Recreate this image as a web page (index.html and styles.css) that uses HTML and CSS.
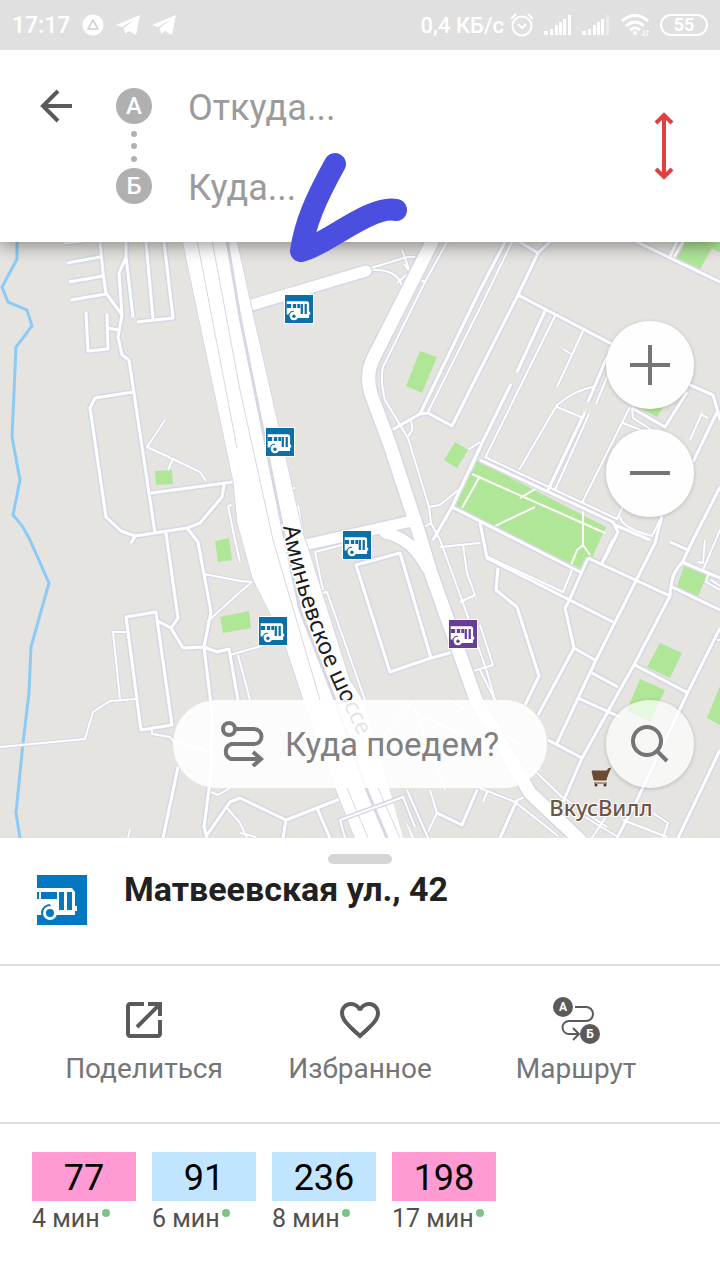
FILE: index.html
```html
<!DOCTYPE html>

<html lang="ru">
	<head>
		<meta charset="utf-8">
		<meta name="viewport" content="width=device-width, initial-scale=1">
		<title>Матвеевская ул., 42</title>
		<link rel="stylesheet" href="styles.css">
	</head>

	<body>
		<!-- Shared icons -->
		<svg class="sprite" aria-hidden="true">
			<symbol id="bus" viewBox="0 0 50 50">
				<rect width="50" height="50" fill="currentColor"/>
				<path fill="#fff" d="M0 13h35l3 4v14h2v5h-2v4H0z"/>
				<path fill="currentColor" d="M0 17h2v7H0zM4 17h16v7H4zM22 17h5v18h-5zM30 17h5v18h-5z"/>
				<circle cx="13" cy="38" r="9" fill="currentColor"/>
				<path fill="#fff" d="M13 29h9v11h-5z"/>
				<path fill="currentColor" d="M0 40h50v10H0z"/>
				<circle cx="13" cy="38" r="7" fill="#fff"/>
				<circle cx="13" cy="38" r="4" fill="currentColor"/>
			</symbol>
			<!-- same bus, drawn larger for the map pins -->
			<symbol id="pin" viewBox="0 0 50 50">
				<rect width="50" height="50" fill="currentColor"/>
				<path fill="#fff" d="M3 11h36q4 0 4 5v14h2v5h-2v6H22a8 8 0 0 1-14-6H3z"/>
				<path fill="currentColor" d="M3 16h8v7H3zM14 16h6v7h-6zM22 16h5v7h-5zM28 16h4v18h-4zM35 16h4v18h-4z"/>
				<path fill="none" stroke="currentColor" stroke-width="2" d="M7 37a8 8 0 0 1 9-8"/>
				<circle cx="16" cy="38" r="7" fill="#fff"/>
				<circle cx="16" cy="38" r="3" fill="currentColor"/>
			</symbol>
			<symbol id="plane" viewBox="0 0 24 20">
				<path fill="#fff" d="M0 10 24 0 20 20 13 16 9 19 8 13 19 4 6 12z"/>
			</symbol>
		</svg>

		<div class="status">
			<span class="clock">17:17</span>
			<svg class="notice" width="22" height="22" viewBox="0 0 22 22"><circle cx="11" cy="11" r="10.5" fill="#fff"/><path d="M11 6 16 15H6z" fill="none" stroke="#d8d8d8" stroke-width="2" stroke-linejoin="round"/></svg>
			<svg class="notice" width="24" height="20"><use href="#plane"/></svg>
			<svg class="notice" width="24" height="20"><use href="#plane"/></svg>
			<span class="speed">0,4 КБ/с</span>
			<svg width="24" height="24" viewBox="0 0 24 24" fill="none" stroke="#fff" stroke-width="2"><circle cx="12" cy="13" r="9.5"/><path d="M8 11l4 4 4-4M1 6 6 1M18 1l5 5"/></svg>
			<svg class="signal" width="28" height="22" viewBox="0 0 28 22" fill="#fff"><path d="M0 17h4v4H0zM6 15h3v6H6zM11 11h3v10h-3zM15 8h3v13h-3zM19 5h3v16h-3zM24 1h3v20h-3z"/></svg>
			<svg class="signal" width="28" height="22" viewBox="0 0 28 22" fill="#fff"><path d="M0 17h4v4H0zM6 15h3v6H6zM11 11h3v10h-3zM15 8h3v13h-3zM19 5h3v16h-3z"/><path opacity=".4" d="M24 1h3v20h-3z"/></svg>
			<svg class="wifi" width="30" height="24" viewBox="0 0 30 24" fill="none" stroke="#fff" stroke-width="3"><path d="M2 8q13-11 26 0M6 13q9-8 18 0M10 17q5-4 10 0"/><circle cx="15" cy="20" r="2" fill="#fff" stroke="none"/><path stroke-width="1" d="M24 17v6l-2-2M27 23v-6l2 2"/></svg>
			<span class="battery">55</span>
		</div>

		<form class="route">
			<button type="button" class="icon-button back" aria-label="Назад">
				<svg width="36" height="36" viewBox="0 0 36 36" fill="none" stroke="#5a5a5a" stroke-width="4"><path d="M34 18H5M20 3 5 18l15 15"/></svg>
			</button>
			<div class="marks">
				<label class="mark" for="from">А</label>
				<i></i><i></i><i></i>
				<label class="mark" for="to">Б</label>
			</div>
			<div class="fields">
				<input type="text" id="from" placeholder="Откуда...">
				<input type="text" id="to" placeholder="Куда...">
			</div>
			<button type="button" class="icon-button" aria-label="Поменять местами">
				<svg width="24" height="70" viewBox="0 0 24 70" fill="none" stroke="#df4040" stroke-width="4"><path d="M12 4v62M4 12l8-8 8 8M4 58l8 8 8-8"/></svg>
			</button>
		</form>

		<div class="map">
			<svg class="canvas" viewBox="0 242 720 596" preserveAspectRatio="xMidYMid slice">
				<defs>
					<!-- footpaths -->
					<g id="paths">
						<path d="M165 420 147 447 173 459 200 472 206 481M173 459 168 470M232 505 228 506 236 545 240 562"/>
						<path d="M127 632H113L120 699M136 699 110 701 93 712 85 739 0 747M152 730V734L170 737 174 742 212 752"/>
						<path d="M204 574 240 581 252 582M207 622 240 592 252 582M211 792 218 795 230 788M227 808 240 823 247 838M130 829 128 838"/>
						<path d="M230 655 265 645M238 655 250 700M240 833 256 837"/>
						<path d="M372 270C393 269 402 278 403 292M371 268 407 257H420M397 283 410 272 402 250M410 272 404 264"/>
						<path d="M447 242 425 282 383 367Q380 380 385 400L408 438 429 507 431 523 440 540 462 600 487 672 495 700M425 282 420 280"/>
						<path d="M429 507 440 505 462 487 480 447M411 421Q415 432 406 437M431 523 424 527M428 412 480 308 512 242M469 449 480 442"/>
						<path d="M555 316 485 458M583 331 557 387M571 354 563 349M607 377 596 404M593 387Q575 390 557 405L519 470M557 407 581 417"/>
						<path d="M589 414 555 490M630 407 582 503M623 423 643 431M632 408 633 418 652 430M702 413 690 440M700 414 708 418"/>
						<path d="M488 557 563 592 572 570M485 457 617 519 638 475M620 517Q622 528 652 536L662 516"/>
						<path d="M307 550 320 593 327 592 365 700M315 552 342 545M315 552 323 590M440 547 480 543M463 545 467 573 475 595 460 602"/>
						<path d="M295 488H290M298 505 302 530M470 672 493 665 480 625M480 670 495 700"/>
						<path d="M410 700 420 716 500 750M380 740 412 702 445 790M450 700 520 745M430 790 437 813 425 838"/>
						<path d="M480 788 515 802 558 836M537 773 562 797 607 827M525 797 517 800M488 790 483 802M585 817 618 837M605 818 592 838M653 813 668 823 663 838M623 820 667 837"/>
						<path d="M705 540 703 563 698 562M720 590 706 582 708 575M720 586 711 580M703 570 720 530M717 640H720"/>
					</g>
					<!-- small streets -->
					<g id="lanes">
						<path d="M100 242 103 273 106 293 122 315M64 243 83 241M67 263 100 257M69 282 103 276M71 300 106 294"/>
						<path d="M86 312 88 351 108 349 107 314M108 328 118 330"/>
						<path d="M126 242V257L119 273 122 315 118 337 122 355 129 360 155 533M126 257 133 317M146 242 153 319M164 242 173 318 137 322"/>
						<path d="M133 392 95 398 90 408 106 517 121 531 135 536 187 528 200 523 222 497 224 485M151 493 233 482"/>
						<path d="M166 533 178 618 171 628M187 528 198 542 211 612 204 647 212 713 211 773 204 827 207 838M135 536 131 543"/>
						<path d="M126 617 156 612 172 725 141 730ZM156 620 171 628 183 648 204 647 217 652 229 649 238 700M178 767 163 838"/>
						<path d="M207 835 230 802 240 798 286 820 340 799M286 820 283 838M317 808 330 838M437 813 462 825 477 790"/>
						<path d="M356 565 400 553 431 658 390 672ZM431 658 453 652"/>
						<path d="M390 431 420 414 428 413 452 426 480 370 518 295 538 253 550 242M420 414 480 290 505 242"/>
						<path d="M520 242 538 253M518 295 610 343 690 385 713 395 718 412 720 420M637 242 720 282M677 242 670 256M683 242 674 257"/>
						<path d="M545 311 517 372M511 384 482 443 470 470M607 357 588 402M585 412 548 490M632 408 665 427 687 392M718 410 693 462"/>
						<path d="M480 447 452 507 433 540M452 507 580 572M480 523 487 558 613 622M588 558 568 603 565 608 574 648 595 660M588 558 670 596"/>
						<path d="M574 648 538 715M498 568 496 590 517 607 539 676 525 705M662 516 655 543 595 662 557 743M613 540 602 563"/>
						<path d="M720 487 693 540 682 563Q671 572 670 596L635 663 582 758 563 802M682 562 720 578M672 587 720 610M615 525 650 540"/>
						<path d="M635 665 688 693M720 628 688 692 637 800 617 838M592 673 618 687M578 698 620 717M548 740 582 758M720 750 678 838"/>
						<path d="M517 800 500 838M670 542 688 550M480 460 613 522 618 532 604 560"/>
					</g>
				</defs>

				<rect y="242" width="720" height="596" fill="#e5e4e1"/>

				<path class="park" d="M476 460 606 527 586 571 453 507ZM420 351 437 357 422 393 406 386ZM455 442 468 450 457 468 444 460Z"/>
				<path class="park" d="M155 471 172 470 173 484 156 485ZM215 541 229 538 232 560 218 562ZM220 617 249 611 251 628 223 633Z"/>
				<path class="park" d="M683 240H720V253L712 248 700 269 677 258ZM638 407 657 417 664 405 648 398ZM684 565 707 575 698 596 677 587Z"/>
				<path class="park" d="M660 643 682 653 670 678 647 667ZM640 679 665 690 650 722 627 710ZM720 686 707 718 720 725Z"/>
				<path class="alley" d="M472 474 605 533M537 488 520 498M535 507 493 527M583 507V545L577 550 570 568M583 545 590 555M462 508 480 476"/>

				<path class="river" d="M17 242V259L2 287 8 302 27 310 32 326 16 347 12 437 20 480 13 515 23 527 30 540 49 583 31 647 29 693 23 743 16 813 20 838"/>

				<use class="paths-edge" href="#paths"/>
				<use class="lanes-edge" href="#lanes"/>
				<use class="paths-fill" href="#paths"/>
				<use class="lanes-fill" href="#lanes"/>

				<!-- avenues -->
				<g class="avenue">
					<path class="edge" d="M432 242 374 357Q365 374 371 394L390 445 418 530 431 573 476 700 530 793 580 840"/>
					<path class="edge thin" d="M250 306 366 271M300 546 412 521M385 533Q412 538 427 568"/>
					<path d="M432 242 374 357Q365 374 371 394L390 445 418 530 431 573 476 700 530 793 580 840"/>
					<path class="thin" d="M248 306 366 271M300 546 412 521M385 533Q412 538 427 568"/>
				</g>

				<!-- highway -->
				<path class="highway" d="M182 240 233 482 237 523 252 578 283 640 303 700 335 788 356 842H417L390 788 363 700 350 680 308 547 303 533 253 313 237 240Z"/>
				<path class="divider" d="M197 240 237 448M212 240 240 390 273 540 320 700M347 788 368 838M378 788 400 838"/>
				<path class="divider wide" d="M227 240 240 317 285 540 300 610 335 700 366 788 387 838"/>
				<path class="gap" d="M389 788 403 838H412L393 788Z"/>
				<g class="bridge">
					<path d="M345 838 340 820 403 797 415 827M407 790 428 838"/>
					<path class="inner" d="M345 838 340 820 403 797 415 827M407 790 428 838"/>
				</g>

				<path id="street" d="M283 527C290 568 303 612 323 660 337 694 352 722 380 780" fill="none"/>
				<text class="street"><textPath href="#street">Аминьевское шоссе</textPath></text>

				<g class="stops">
					<rect x="284" y="294" width="30" height="30"/><use href="#pin" x="285" y="295" width="28" height="28"/>
					<rect x="265" y="427" width="30" height="30"/><use href="#pin" x="266" y="428" width="28" height="28"/>
					<rect x="342" y="530" width="30" height="30"/><use href="#pin" x="343" y="531" width="28" height="28"/>
					<rect x="258" y="616" width="30" height="30"/><use href="#pin" x="259" y="617" width="28" height="28"/>
					<rect x="448" y="619" width="30" height="30"/><use class="tram" href="#pin" x="449" y="620" width="28" height="28"/>
				</g>

				<path d="M592 771H608L606 780H594ZM606 780 608 769 611 768M594 783H607" fill="#6d4a30" stroke="#6d4a30"/>
				<circle cx="596" cy="785" r="1.5" fill="#4a3526"/><circle cx="605" cy="785" r="1.5" fill="#4a3526"/>
				<text class="shop" x="601" y="816">ВкусВилл</text>
			</svg>

			<div class="controls">
				<div class="zoom">
					<button type="button" class="round" aria-label="Приблизить"><svg width="40" height="40" viewBox="0 0 40 40"><path d="M20 0V40M0 20H40"/></svg></button>
					<button type="button" class="round" aria-label="Отдалить"><svg width="40" height="40" viewBox="0 0 40 40"><path d="M0 20H40"/></svg></button>
				</div>
				<div class="bottom">
					<button type="button" class="where">
						<svg width="44" height="46" viewBox="0 0 44 46"><circle cx="8" cy="8" r="6"/><path d="M14 8H33a7.5 7.5 0 0 1 0 15H10a8 8 0 0 0 0 15H39M32 31l8 7-8 7"/></svg>
						Куда поедем?
					</button>
					<button type="button" class="round search" aria-label="Поиск"><svg width="40" height="40" viewBox="0 0 40 40"><circle cx="17" cy="17" r="14"/><path d="M27 27 37 37"/></svg></button>
				</div>
			</div>
		</div>

		<div class="sheet">
			<div class="handle"></div>
			<div class="stop">
				<svg width="50" height="50"><use href="#bus"/></svg>
				<h1>Матвеевская ул., 42</h1>
			</div>
			<div class="actions">
				<button type="button">
					<svg width="48" height="48" viewBox="0 0 24 24"><path d="M19 19H5V5h7V3H5c-1.1 0-2 .9-2 2v14c0 1.1.9 2 2 2h14c1.1 0 2-.9 2-2v-7h-2v7zM14 3v2h3.6l-9.8 9.8 1.4 1.4L19 6.4V10h2V3h-7z"/></svg>
					Поделиться
				</button>
				<button type="button">
					<svg width="48" height="48" viewBox="0 0 24 24"><path d="M16.5 3c-1.74 0-3.41.81-4.5 2.09C10.91 3.81 9.24 3 7.5 3 4.42 3 2 5.42 2 8.5c0 3.78 3.4 6.86 8.55 11.54L12 21.35l1.45-1.32C18.6 15.36 22 12.28 22 8.5 22 5.42 19.58 3 16.5 3zm-4.4 15.55l-.1.1-.1-.1C7.14 14.24 4 11.39 4 8.5 4 6.5 5.5 5 7.5 5c1.54 0 3.04.99 3.57 2.36h1.87C13.46 5.99 14.96 5 16.5 5c2 0 3.5 1.5 3.5 3.5 0 2.89-3.14 5.74-7.9 10.05z"/></svg>
					Избранное
				</button>
				<button type="button">
					<svg width="48" height="48" viewBox="0 0 48 48"><circle cx="11" cy="11" r="10"/><circle cx="38" cy="38" r="10"/><path class="line" d="M23 11H34a7 7 0 0 1 0 14H17a6 6 0 0 0 0 13H26M21 32l6 6-6 6"/><text x="11" y="15">А</text><text x="38" y="42">Б</text></svg>
					Маршрут
				</button>
			</div>
			<div class="buses">
				<div class="bus"><button type="button" class="tram-line">77</button><span>4 мин</span></div>
				<div class="bus"><button type="button">91</button><span>6 мин</span></div>
				<div class="bus"><button type="button">236</button><span>8 мин</span></div>
				<div class="bus"><button type="button" class="tram-line">198</button><span>17 мин</span></div>
			</div>
		</div>

		<!-- marker stroke drawn over the screen -->
		<svg class="scribble" width="118" height="112" viewBox="290 152 118 112"><path d="M335 164C315 200 305 224 301 251 324 246 372 204 396 210"/></svg>
	</body>
</html>
```
FILE: styles.css
```css
* {
	box-sizing: border-box;
}

body {
	display: flex;
	flex-direction: column;
	position: relative;
	min-height: 100vh;
	margin: 0;
	background-color: #fff;
	color: #757575;
	font-family: Roboto, "Noto Sans", sans-serif;
}

button {
	padding: 0;
	border: 0;
	background: none;
	color: inherit;
	font-family: inherit;
	cursor: pointer;
}

svg {
	display: block;
	flex: none;
}

.sprite {
	position: absolute;
	width: 0;
	height: 0;
}

/* status bar */
.status {
	display: flex;
	align-items: center;
	position: relative;
	z-index: 2;
	height: 50px;
	padding: 0 12px;
	background-color: #e0e0e0;
	color: #fff;
	font-size: 23px;
	font-weight: 500;
}

.notice {
	margin-left: 12px;
}

.speed {
	margin-left: auto;
	margin-right: 6px;
	font-size: 22px;
}

.signal {
	margin-left: 10px;
}

.wifi {
	margin: 0 10px;
}

.battery {
	width: 48px;
	height: 22px;
	border: 2px solid #fff;
	border-radius: 11px;
	font-size: 18px;
	font-weight: bold;
	line-height: 18px;
	text-align: center;
}

/* from / to */
.route {
	display: flex;
	align-items: center;
	position: relative;
	z-index: 1;
	padding: 33px 44px 33px 38px;
	background-color: #fff;
	box-shadow: 0 4px 16px rgba(0, 0, 0, .4);
}

.back {
	align-self: flex-start;
	margin: 5px 42px 0 0;
}

.marks {
	display: flex;
	flex-direction: column;
	align-items: center;
	justify-content: space-between;
	height: 116px;
	margin-right: 36px;
}

.marks i {
	width: 6px;
	height: 6px;
	border-radius: 3px;
	background-color: #b0b0b0;
}

.mark {
	width: 36px;
	height: 36px;
	border-radius: 18px;
	background-color: #b0b0b0;
	color: #fff;
	font-size: 24px;
	font-weight: 500;
	line-height: 36px;
	text-align: center;
}

.fields {
	display: flex;
	flex: 1;
	flex-direction: column;
	gap: 34px;
	min-width: 0;
}

.fields input {
	width: 100%;
	height: 46px;
	padding: 4px 0 0;
	border: 0;
	outline: 0;
	background: none;
	color: #333;
	font-family: inherit;
	font-size: 36px;
}

.fields input::placeholder {
	color: #9b9b9b;
}

/* map */
.map {
	flex: 1;
	position: relative;
	min-height: 400px;
	overflow: hidden;
	background-color: #e5e4e1;
}

.canvas {
	position: absolute;
	width: 100%;
	height: 100%;
}

.park {
	fill: #b0e697;
}

.alley {
	fill: none;
	stroke: #fff;
	stroke-width: 2;
}

.river {
	fill: none;
	stroke: #8ccbf5;
	stroke-width: 3;
}

.paths-edge,
.lanes-edge,
.paths-fill,
.lanes-fill {
	fill: none;
	stroke: #d6d7e4;
	stroke-linejoin: round;
}

.paths-edge {
	stroke-width: 4;
}

.lanes-edge {
	stroke-width: 6;
}

.paths-fill,
.lanes-fill {
	stroke: #fff;
	stroke-width: 2;
}

.lanes-fill {
	stroke-width: 3;
}

.avenue {
	fill: none;
	stroke: #fff;
	stroke-width: 13;
	stroke-linecap: round;
}

.avenue .thin {
	stroke-width: 11;
}

.avenue .edge {
	stroke: #d6d7e4;
	stroke-width: 16;
}

.avenue .edge.thin {
	stroke-width: 14;
}

.highway {
	fill: #fff;
	stroke: #d6d7e4;
	stroke-width: 1;
}

.divider {
	fill: none;
	stroke: #d6d7e4;
	stroke-width: 1;
}

.divider.wide {
	stroke-width: 3;
}

.gap {
	fill: #e5e4e1;
}

.bridge {
	fill: none;
	stroke: #d6d7e4;
	stroke-width: 5;
}

.bridge .inner {
	stroke: #fff;
	stroke-width: 2;
}

.street {
	fill: #1c1c1c;
	stroke: #fff;
	stroke-width: 3;
	paint-order: stroke;
	font-family: "Noto Sans", sans-serif;
	font-size: 23px;
}

.stops {
	color: #0b6fa8;
	fill: #fff;
}

.tram {
	color: #6a3c96;
}

.shop {
	fill: #6d5646;
	stroke: #fff;
	stroke-width: 2;
	paint-order: stroke;
	font-family: "Noto Sans", sans-serif;
	font-size: 22px;
	font-weight: 500;
	text-anchor: middle;
}

.controls {
	display: flex;
	flex-direction: column;
	justify-content: space-between;
	position: absolute;
	inset: 0;
	padding: 79px 26px 50px;
}

.controls svg {
	fill: none;
	stroke: #757575;
	stroke-width: 4;
}

.zoom {
	display: flex;
	flex-direction: column;
	align-items: flex-end;
	gap: 20px;
}

.round {
	display: flex;
	align-items: center;
	justify-content: center;
	width: 88px;
	height: 88px;
	border-radius: 44px;
	background-color: rgba(255, 255, 255, .95);
	box-shadow: 0 1px 4px rgba(0, 0, 0, .2);
}

.round.search {
	justify-self: end;
	background-color: rgba(255, 255, 255, .7);
}

.bottom {
	display: grid;
	grid-template-columns: 1fr auto 1fr;
}

.where {
	display: flex;
	grid-column: 2;
	align-items: center;
	gap: 20px;
	height: 88px;
	padding: 0 48px;
	border-radius: 44px;
	background-color: rgba(255, 255, 255, .88);
	color: #808080;
	font-size: 33px;
}

/* bottom sheet */
.sheet {
	padding-top: 16px;
	background-color: #fff;
}

.handle {
	width: 64px;
	height: 10px;
	margin: 0 auto 11px;
	border-radius: 5px;
	background-color: #d6d6d6;
}

.stop {
	display: flex;
	gap: 37px;
	padding: 0 37px 39px;
	color: #0277c2;
}

h1 {
	margin: 0;
	color: #212121;
	font-size: 34px;
	font-weight: bold;
	line-height: 28px;
}

.actions {
	display: grid;
	grid-template-columns: repeat(3, 1fr);
	padding: 30px 36px 36px;
	border: solid #dedede;
	border-width: 2px 0;
}

.actions button {
	display: flex;
	flex-direction: column;
	align-items: center;
	gap: 8px;
	font-size: 28px;
	line-height: 34px;
}

.actions svg {
	fill: #5a5a5a;
}

.actions .line {
	fill: none;
	stroke: #5a5a5a;
	stroke-width: 2;
}

.actions text {
	fill: #fff;
	font-size: 12px;
	font-weight: bold;
	text-anchor: middle;
}

.buses {
	display: flex;
	gap: 16px;
	padding: 28px 32px 47px;
}

.bus {
	width: 104px;
}

.bus button {
	display: block;
	width: 100%;
	height: 49px;
	background-color: #c2e5ff;
	color: #000;
	font-size: 36px;
	line-height: 52px;
}

.bus .tram-line {
	background-color: #ff9bd2;
}

.bus span {
	display: flex;
	gap: 2px;
	margin-top: 4px;
	color: #505050;
	font-size: 25px;
	line-height: 28px;
}

.bus span::after {
	content: "";
	width: 8px;
	height: 8px;
	margin-top: 4px;
	border-radius: 4px;
	background-color: #7fc384;
}

.scribble {
	position: absolute;
	top: 152px;
	left: 290px;
	z-index: 3;
	fill: none;
	stroke: #4a4fe0;
	stroke-width: 22;
	stroke-linecap: round;
	stroke-linejoin: round;
	pointer-events: none;
}
```
